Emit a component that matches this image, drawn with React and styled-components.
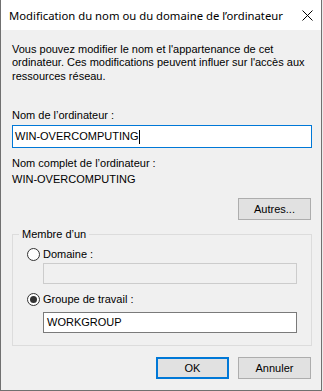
import React from "react";
import styled, { createGlobalStyle } from "styled-components";

const Global = createGlobalStyle`
  html, body { margin: 0; padding: 0; background: #eaeaea; }
  * { box-sizing: border-box; }
`;

const Window = styled.div`
  width: 322px;
  height: 391px;
  background: #f0f0f0;
  border: 1px solid #707070;
  border-top: none;
  display: flex;
  flex-direction: column;
  font-family: "Liberation Sans", Arial, sans-serif;
  font-size: 11px;
  line-height: 13px;
  color: #000;
`;

const TitleBar = styled.div`
  height: 30px;
  background: #fff;
  display: flex;
  align-items: center;
  justify-content: space-between;
  padding: 0 8px 0 8px;
  flex-shrink: 0;
`;

const TitleText = styled.span`
  font-family: "Noto Sans", "Open Sans", sans-serif;
  font-size: 11.3px;
  line-height: 16px;
  color: #000;
  margin-top: 1px;
`;

const Body = styled.div`
  display: flex;
  flex-direction: column;
  padding: 13px 9px 0 11px;
`;

const Paragraph = styled.p`
  margin: 0;
  line-height: 13.4px;
  margin-top: ${(p) => p.$mt || 0}px;
`;

const Label = styled.div`
  margin-top: ${(p) => p.$mt || 0}px;
  white-space: nowrap;
`;

const TextBox = styled.div`
  margin-top: ${(p) => p.$mt || 0}px;
  margin-left: ${(p) => p.$ml || 0}px;
  width: ${(p) => p.$w}px;
  height: ${(p) => p.$h}px;
  border: 1px solid ${(p) => p.$border};
  background: ${(p) => p.$bg || "#fff"};
  display: flex;
  align-items: center;
  padding-left: ${(p) => p.$pl || 2}px;
  white-space: nowrap;
`;

const Caret = styled.span`
  display: inline-block;
  width: 1px;
  height: 14px;
  background: #000;
  margin-left: 1px;
`;

const Button = styled.button`
  width: 73px;
  height: 22px;
  margin: 0;
  padding: 0;
  background: #e1e1e1;
  border: ${(p) => (p.$default ? "2px solid #0078d7" : "1px solid #adadad")};
  font-family: "Liberation Sans", Arial, sans-serif;
  font-size: 11px;
  color: #000;
  display: flex;
  align-items: center;
  justify-content: center;
`;

const RightRow = styled.div`
  display: flex;
  justify-content: flex-end;
  gap: 9px;
  margin-top: ${(p) => p.$mt || 0}px;
  padding-right: 1px;
`;

const Group = styled.fieldset`
  margin: 8px 0 0 0;
  padding: 0 14px 12px 6px;
  border: 1px solid #dcdcdc;
  min-width: 0;
  display: flex;
  flex-direction: column;
`;

const Legend = styled.legend`
  padding: 0 3px;
  line-height: 13px;
`;

const RadioRow = styled.div`
  display: flex;
  align-items: center;
  gap: 3px;
  height: 13px;
  margin-top: ${(p) => p.$mt || 0}px;
  margin-left: 8px;
`;

const RadioCircle = styled.span`
  width: 13px;
  height: 13px;
  border-radius: 50%;
  border: 1px solid #333;
  background: #fff;
  display: flex;
  align-items: center;
  justify-content: center;
  flex-shrink: 0;

  &::after {
    content: "";
    width: 7px;
    height: 7px;
    border-radius: 50%;
    background: ${(p) => (p.$checked ? "#333" : "transparent")};
  }
`;

function CloseIcon() {
  return (
    <svg width="11" height="11" viewBox="0 0 11 11">
      <path d="M0.5 0.5 L10.5 10.5 M10.5 0.5 L0.5 10.5" stroke="#000" strokeWidth="1" fill="none" />
    </svg>
  );
}

function Radio({ checked, children, mt }) {
  return (
    <RadioRow $mt={mt}>
      <RadioCircle $checked={checked} />
      <span>{children}</span>
    </RadioRow>
  );
}

export default function App() {
  return (
    <>
      <Global />
      <Window>
        <TitleBar>
          <TitleText>Modification du nom ou du domaine de l’ordinateur</TitleText>
          <CloseIcon />
        </TitleBar>
        <Body>
          <Paragraph>
            Vous pouvez modifier le nom et l'appartenance de cet ordinateur. Ces modifications peuvent influer sur l'accès aux ressources réseau.
          </Paragraph>
          <Label $mt={26}>Nom de l’ordinateur :</Label>
          <TextBox $mt={3} $w={300} $h={23} $border="#0078d7">
            WIN-OVERCOMPUTING
            <Caret />
          </TextBox>
          <Label $mt={9}>Nom complet de l’ordinateur :</Label>
          <Label $mt={3}>WIN-OVERCOMPUTING</Label>
          <RightRow $mt={12}>
            <Button>Autres...</Button>
          </RightRow>
          <Group>
            <Legend>Membre d’un</Legend>
            <Radio mt={7}>Domaine :</Radio>
            <TextBox $mt={2} $ml={24} $w={254} $h={21} $border="#cccccc" $bg="#f0f0f0" />
            <Radio mt={9} checked>
              Groupe de travail :
            </Radio>
            <TextBox $mt={6} $ml={24} $w={254} $h={21} $border="#7a7a7a" $pl={3}>
              WORKGROUP
            </TextBox>
          </Group>
          <RightRow $mt={11}>
            <Button $default>OK</Button>
            <Button>Annuler</Button>
          </RightRow>
        </Body>
      </Window>
    </>
  );
}
